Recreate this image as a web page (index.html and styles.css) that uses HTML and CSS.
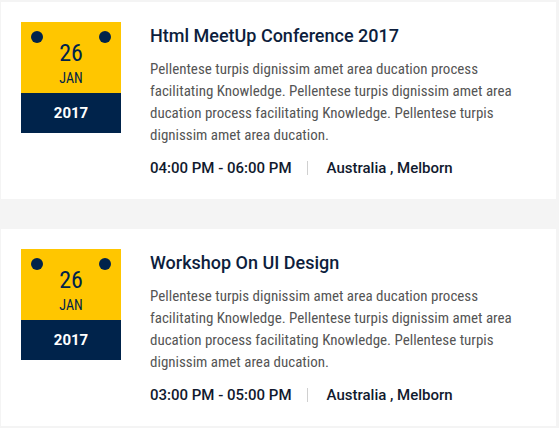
FILE: index.html
```html
<!DOCTYPE html>
<html>
<head>
<meta charset="utf-8">
<link rel="stylesheet" href="styles.css">
</head>
<body>
<div class="list">
  <div class="event">
    <div class="date">
      <span class="dot dot-l"></span><span class="dot dot-r"></span>
      <div class="date-top">
        <div class="day">26</div>
        <div class="month">JAN</div>
      </div>
      <div class="year">2017</div>
    </div>
    <div class="info">
      <h3 class="title">Html MeetUp Conference 2017</h3>
      <p class="desc">Pellentese turpis dignissim amet area ducation process facilitating Knowledge. Pellentese turpis dignissim amet area ducation process facilitating Knowledge. Pellentese turpis dignissim amet area ducation.</p>
      <div class="meta">
        <span class="time">04:00 PM - 06:00 PM</span>
        <span class="place">Australia , Melborn</span>
      </div>
    </div>
  </div>
  <div class="event">
    <div class="date">
      <span class="dot dot-l"></span><span class="dot dot-r"></span>
      <div class="date-top">
        <div class="day">26</div>
        <div class="month">JAN</div>
      </div>
      <div class="year">2017</div>
    </div>
    <div class="info">
      <h3 class="title">Workshop On UI Design</h3>
      <p class="desc">Pellentese turpis dignissim amet area ducation process facilitating Knowledge. Pellentese turpis dignissim amet area ducation process facilitating Knowledge. Pellentese turpis dignissim amet area ducation.</p>
      <div class="meta">
        <span class="time">03:00 PM - 05:00 PM</span>
        <span class="place">Australia , Melborn</span>
      </div>
    </div>
  </div>
</div>
</body>
</html>
```

FILE: styles.css
```css
html, body {
  margin: 0;
  padding: 0;
  background: #f4f4f4;
}
body {
  font-family: Roboto, "Liberation Sans", sans-serif;
}
.list {
  display: flex;
  flex-direction: column;
  gap: 30px;
  padding: 2px 3px 0 1px;
}
.event {
  background: #fff;
  display: flex;
  gap: 29px;
  padding: 20px;
  height: 157px;
}
.date {
  position: relative;
  width: 100px;
  flex: none;
  align-self: flex-start;
  display: flex;
  flex-direction: column;
}
.date-top {
  background: #ffc600;
  height: 71px;
  display: flex;
  flex-direction: column;
  align-items: center;
  color: #00234b;
  font-stretch: condensed;
}
.day {
  font-size: 24px;
  line-height: 24px;
  margin-top: 19px;
}
.month {
  font-size: 14px;
  line-height: 16px;
  margin-top: 5px;
}
.year {
  background: #00234b;
  color: #fff;
  height: 40px;
  display: flex;
  align-items: center;
  justify-content: center;
  font-size: 15px;
  font-weight: 700;
}
.dot {
  position: absolute;
  top: 9px;
  width: 12px;
  height: 12px;
  border-radius: 50%;
  background: #00234b;
}
.dot-l { left: 10px; }
.dot-r { right: 10px; }
.info {
  flex: 1;
  display: flex;
  flex-direction: column;
}
.title {
  margin: 2px 0 0;
  font-size: 18px;
  line-height: 24px;
  font-weight: 500;
  color: #0d1e3d;
}
.desc {
  margin: 10px 0 0;
  font-size: 15px;
  line-height: 22px;
  color: #555;
  font-stretch: condensed;
}
.meta {
  margin-top: 12px;
  display: flex;
  align-items: center;
  font-size: 15px;
  font-weight: 500;
  color: #111a2e;
  line-height: 20px;
}
.time {
  padding-right: 15px;
  margin-right: 19px;
  border-right: 1px solid #d0d0d0;
  line-height: 14px;
}
```
